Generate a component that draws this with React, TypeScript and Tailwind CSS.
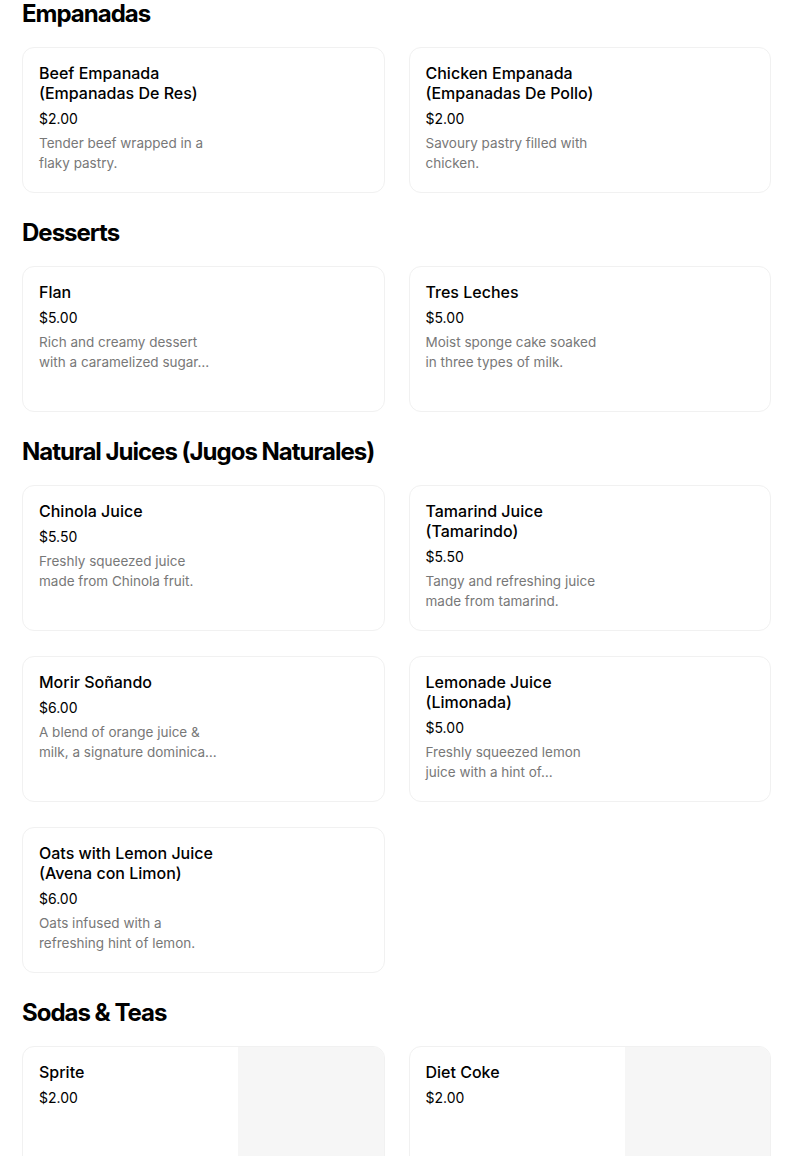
import React from "react";

type Item = { name: string[]; price: string; desc?: string[]; image?: boolean };
type Section = { title: string; items: Item[] };

const sections: Section[] = [
  {
    title: "Empanadas",
    items: [
      { name: ["Beef Empanada", "(Empanadas De Res)"], price: "$2.00", desc: ["Tender beef wrapped in a", "flaky pastry."] },
      { name: ["Chicken Empanada", "(Empanadas De Pollo)"], price: "$2.00", desc: ["Savoury pastry filled with", "chicken."] },
    ],
  },
  {
    title: "Desserts",
    items: [
      { name: ["Flan"], price: "$5.00", desc: ["Rich and creamy dessert", "with a caramelized sugar…"] },
      { name: ["Tres Leches"], price: "$5.00", desc: ["Moist sponge cake soaked", "in three types of milk."] },
    ],
  },
  {
    title: "Natural Juices (Jugos Naturales)",
    items: [
      { name: ["Chinola Juice"], price: "$5.50", desc: ["Freshly squeezed juice", "made from Chinola fruit."] },
      { name: ["Tamarind Juice", "(Tamarindo)"], price: "$5.50", desc: ["Tangy and refreshing juice", "made from tamarind."] },
      { name: ["Morir Soñando"], price: "$6.00", desc: ["A blend of orange juice &", "milk, a signature dominica…"] },
      { name: ["Lemonade Juice", "(Limonada)"], price: "$5.00", desc: ["Freshly squeezed lemon", "juice with a hint of…"] },
      { name: ["Oats with Lemon Juice", "(Avena con Limon)"], price: "$6.00", desc: ["Oats infused with a", "refreshing hint of lemon."] },
    ],
  },
  {
    title: "Sodas & Teas",
    items: [
      { name: ["Sprite"], price: "$2.00", image: true },
      { name: ["Diet Coke"], price: "$2.00", image: true },
    ],
  },
];

function Card({ item }: { item: Item }) {
  return (
    <div className="flex h-[146px] overflow-hidden rounded-[12px] border border-[#f1f1f1] bg-white">
      <div className="w-[215px] shrink-0 pl-4 pt-[15px]">
        <div className="text-[16px] font-medium leading-5 text-black">
          {item.name.map((l) => (
            <div key={l} className="whitespace-nowrap">{l}</div>
          ))}
        </div>
        <div className="mt-[6px] text-[14px] leading-5 text-black">{item.price}</div>
        {item.desc && (
          <div className="mt-1 text-[13.5px] leading-5 text-[#787878]">
            {item.desc.map((l) => (
              <div key={l} className="whitespace-nowrap">{l}</div>
            ))}
          </div>
        )}
      </div>
      <div className="flex-1" />
      {item.image && <div className="h-full w-[146px] shrink-0 bg-[#f6f6f6]" />}
    </div>
  );
}

export default function App() {
  return (
    <div
      className="min-h-[1156px] w-[804px] bg-white pl-[22px] pr-[33px]"
      style={{ fontFamily: "Inter, 'Noto Sans', sans-serif" }}
    >
      {sections.map((s, i) => (
        <div key={s.title} className={i === 0 ? "" : "mt-[26px]"}>
          <h2 className="mb-[19px] h-[28px] text-[24px] font-bold leading-[28px] tracking-[-1px] text-black">
            {s.title}
          </h2>
          <div className="grid grid-cols-2 gap-x-6 gap-y-[25px]">
            {s.items.map((it) => (
              <Card key={it.name.join(" ")} item={it} />
            ))}
          </div>
        </div>
      ))}
    </div>
  );
}
